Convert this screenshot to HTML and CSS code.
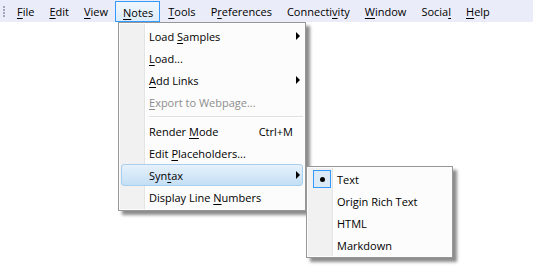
FILE: index.html
```html
<!DOCTYPE html>
<html>
<head>
<meta charset="utf-8">
<link rel="stylesheet" href="styles.css">
</head>
<body>
<div class="menubar">
  <span class="grip"></span>
  <span class="mb-item"><u>F</u>ile</span>
  <span class="mb-item"><u>E</u>dit</span>
  <span class="mb-item"><u>V</u>iew</span>
  <span class="mb-item active"><u>N</u>otes</span>
  <span class="mb-item"><u>T</u>ools</span>
  <span class="mb-item">P<u>r</u>eferences</span>
  <span class="mb-item">Connecti<u>v</u>ity</span>
  <span class="mb-item"><u>W</u>indow</span>
  <span class="mb-item">Socia<u>l</u></span>
  <span class="mb-item"><u>H</u>elp</span>
</div>

<div class="menu main-menu">
  <div class="row"><span class="label">Load <u>S</u>amples</span><span class="arrow"></span></div>
  <div class="row"><span class="label"><u>L</u>oad...</span></div>
  <div class="row"><span class="label"><u>A</u>dd Links</span><span class="arrow"></span></div>
  <div class="row disabled"><span class="label"><u>E</u>xport to Webpage...</span></div>
  <div class="sep"></div>
  <div class="row"><span class="label">Render <u>M</u>ode</span><span class="shortcut">Ctrl+M</span></div>
  <div class="row"><span class="label">Edit <u>P</u>laceholders...</span></div>
  <div class="row hot"><span class="label">Syn<u>t</u>ax</span><span class="arrow"></span></div>
  <div class="row"><span class="label">Display Line <u>N</u>umbers</span></div>
</div>

<div class="menu sub-menu">
  <div class="row"><span class="check"><span class="dot"></span></span><span class="label">Text</span></div>
  <div class="row"><span class="label">Origin Rich Text</span></div>
  <div class="row"><span class="label">HTML</span></div>
  <div class="row"><span class="label">Markdown</span></div>
</div>
</body>
</html>
```

FILE: styles.css
```css
html, body {
  margin: 0;
  padding: 0;
  background: #ffffff;
  width: 533px;
  height: 275px;
  overflow: hidden;
  font-family: "Open Sans", "Noto Sans", sans-serif;
  font-size: 11px;
  color: #000;
}
u { text-decoration: underline; text-underline-offset: 2px; }

.menubar {
  height: 22px;
  background: #eaecf9;
  display: flex;
  align-items: stretch;
  padding-left: 3px;
  box-sizing: border-box;
}
.grip {
  width: 2px;
  margin: 6px 4px 0 0;
  height: 11px;
  background-image: linear-gradient(#a3a7bb 2px, transparent 2px);
  background-size: 2px 3px;
}
.mb-item {
  display: flex;
  align-items: center;
  padding: 1px 6px 0 7px;
  margin-top: 1px;
  height: 20px;
  box-sizing: border-box;
  border: 1px solid transparent;
  white-space: nowrap;
}
.mb-item.active {
  border-color: #3399ff;
  background: linear-gradient(#f0f7fd, #dcecfb);
  height: 21px;
}

.menu {
  position: absolute;
  background: #fcfcfc;
  border: 1px solid #979797;
  box-shadow: 4px 4px 3px rgba(0,0,0,0.45);
  box-sizing: border-box;
}
.menu::before {
  content: "";
  position: absolute;
  top: 1px;
  bottom: 1px;
  left: 1px;
  width: 24px;
  background: #f1f1f1;
  border-right: 1px solid #e2e3e3;
  box-shadow: 1px 0 0 #ffffff;
}
.main-menu {
  left: 118px;
  top: 22px;
  width: 188px;
  height: 189px;
  padding: 2px 2px;
}
.sub-menu {
  left: 306px;
  top: 166px;
  width: 147px;
  height: 92px;
  padding: 1px 2px;
  z-index: 2;
}
.row {
  position: relative;
  height: 22px;
  display: flex;
  align-items: center;
  padding-left: 27px;
  padding-right: 2px;
  box-sizing: border-box;
  border: 1px solid transparent;
  border-radius: 3px;
  white-space: nowrap;
  z-index: 1;
}
.row .label { flex: 1; }
.row.disabled { color: #8d8d8d; }
.shortcut { padding-right: 7px; }
.arrow {
  width: 0;
  height: 0;
  border-top: 4px solid transparent;
  border-bottom: 4px solid transparent;
  border-left: 4px solid #000;
}
.row.hot {
  background: linear-gradient(#e6f1fb, #c4dff5);
  border-color: #a8d0ee;
}
.sep {
  height: 7px;
  margin-left: 28px;
  position: relative;
  z-index: 1;
  display: flex;
  align-items: center;
}
.sep::after {
  content: "";
  display: block;
  width: 100%;
  height: 1px;
  background: #e0e0e0;
  box-shadow: 0 1px 0 #ffffff;
}
.check {
  position: absolute;
  left: 3px;
  top: 1px;
  width: 18px;
  height: 18px;
  box-sizing: border-box;
  border: 1px solid #3399ff;
  background: #dceaf8;
  display: flex;
  align-items: center;
  justify-content: center;
}
.dot {
  width: 5px;
  height: 5px;
  border-radius: 50%;
  background: #000;
}
```
